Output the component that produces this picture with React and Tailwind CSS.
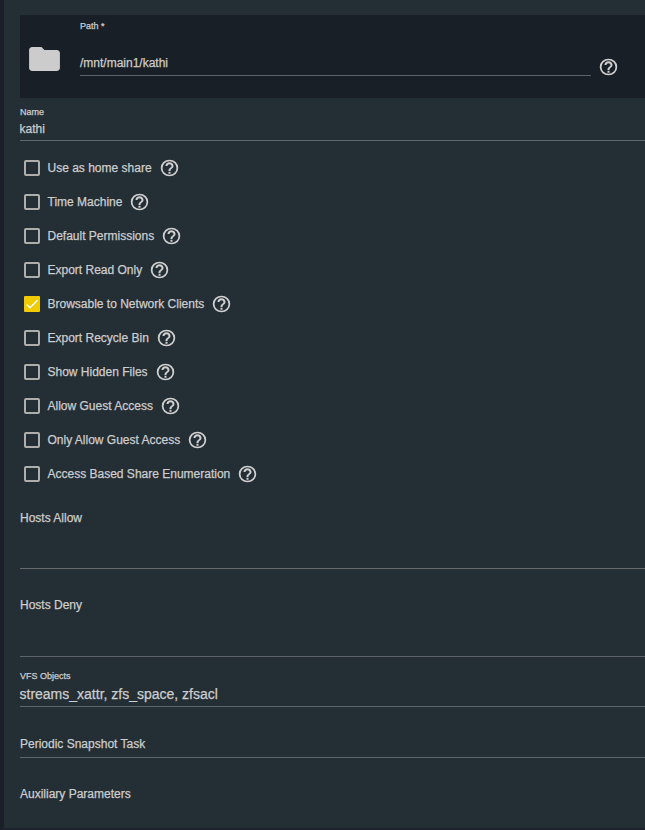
const OPTIONS = [
  { id: "home", label: "Use as home share" },
  { id: "timemachine", label: "Time Machine" },
  { id: "default_permissions", label: "Default Permissions" },
  { id: "ro", label: "Export Read Only" },
  { id: "browsable", label: "Browsable to Network Clients", checked: true },
  { id: "recyclebin", label: "Export Recycle Bin" },
  { id: "showhiddenfiles", label: "Show Hidden Files" },
  { id: "guestok", label: "Allow Guest Access" },
  { id: "guestonly", label: "Only Allow Guest Access" },
  { id: "abe", label: "Access Based Share Enumeration" },
];

function HelpIcon() {
  return (
    <svg className="h-[20px] w-[21px] shrink-0 fill-[#d0d0d0]" viewBox="0 0 24 24" preserveAspectRatio="none">
      <circle cx="12" cy="12" r="9" fill="none" stroke="#d0d0d0" strokeWidth="2" />
      <path transform="translate(-1.8 -1.8) scale(1.15)" d="M11 18h2v-2h-2v2zm1-12c-2.21 0-4 1.79-4 4h2c0-1.1.9-2 2-2s2 .9 2 2c0 2-3 1.75-3 5h2c0-2.25 3-2.5 3-5 0-2.21-1.79-4-4-4z" />
    </svg>
  );
}

function FolderIcon() {
  return (
    <svg className="h-[36px] w-[37px] shrink-0 fill-[#cccccc]" viewBox="0 0 24 24" preserveAspectRatio="none">
      <path d="M10 4H4c-1.1 0-1.99.9-1.99 2L2 18c0 1.1.9 2 2 2h16c1.1 0 2-.9 2-2V8c0-1.1-.9-2-2-2h-8l-2-2z" />
    </svg>
  );
}

function Checkbox({ checked }) {
  if (!checked) return <span className="size-4 shrink-0 rounded-[2px] border-2 border-[#afaeac]" />;
  return (
    <span className="size-4 shrink-0 rounded-[1px] bg-[#f0cb00]">
      <svg className="size-4" viewBox="0 0 24 24" fill="none" stroke="#fff" strokeWidth="2.3">
        <path d="M4.1 12.7 9 17.6 20.3 6.3" />
      </svg>
    </span>
  );
}

function Option({ option }) {
  return (
    <div className="flex h-[34px] items-center pl-1">
      <Checkbox checked={option.checked} />
      <span className="ml-[7.5px] whitespace-nowrap">{option.label}</span>
      <span className="ml-[7px]"><HelpIcon /></span>
    </div>
  );
}

function PathField() {
  return (
    <div className="flex h-[83px] bg-[#191f26] pl-[6px]">
      <div className="pt-[26px]"><FolderIcon /></div>
      <div className="ml-[17px] h-[61px] w-[511px] border-b border-[#5b6166]">
        <div className="pt-[5px] text-[9px] leading-3">Path *</div>
        <div className="mt-[23px] leading-4">/mnt/main1/kathi</div>
      </div>
      <div className="ml-[7px] pt-[42px]"><HelpIcon /></div>
    </div>
  );
}

export default function App() {
  return (
    <div className="h-[830px] w-[645px] overflow-hidden border-b-2 border-l-4 border-b-[#1e232d] border-l-[#1a1f29] bg-[#242e35] pl-4 pt-[15px] font-['Liberation_Sans',Arial,sans-serif] text-[12px] text-[#cdcdcd] [-webkit-text-stroke:0.25px_#cdcdcd]">
      <PathField />
      <div className="h-[43px] border-b border-[#5f686c] pt-2">
        <div className="text-[9px] leading-3">Name</div>
        <div className="-ml-[0.5px] mt-[3px] leading-4">kathi</div>
      </div>
      <div className="pt-[10px]">
        {OPTIONS.map((option) => <Option key={option.id} option={option} />)}
      </div>
      <div className="h-[78px] border-b border-[#666b6e] pt-[19px] leading-4">Hosts Allow</div>
      <div className="h-[88px] border-b border-[#5f666b] pt-7 leading-4">Hosts Deny</div>
      <div className="h-[50px] border-b border-[#5f666b] pt-[13px]">
        <div className="text-[9px] leading-3">VFS Objects</div>
        <div className="-ml-[0.5px] mt-1 text-[14px] leading-4">streams_xattr, zfs_space, zfsacl</div>
      </div>
      <div className="h-[51px] border-b border-[#5f666b] pt-[29px] leading-4">Periodic Snapshot Task</div>
      <div className="pt-7 leading-4">Auxiliary Parameters</div>
    </div>
  );
}
